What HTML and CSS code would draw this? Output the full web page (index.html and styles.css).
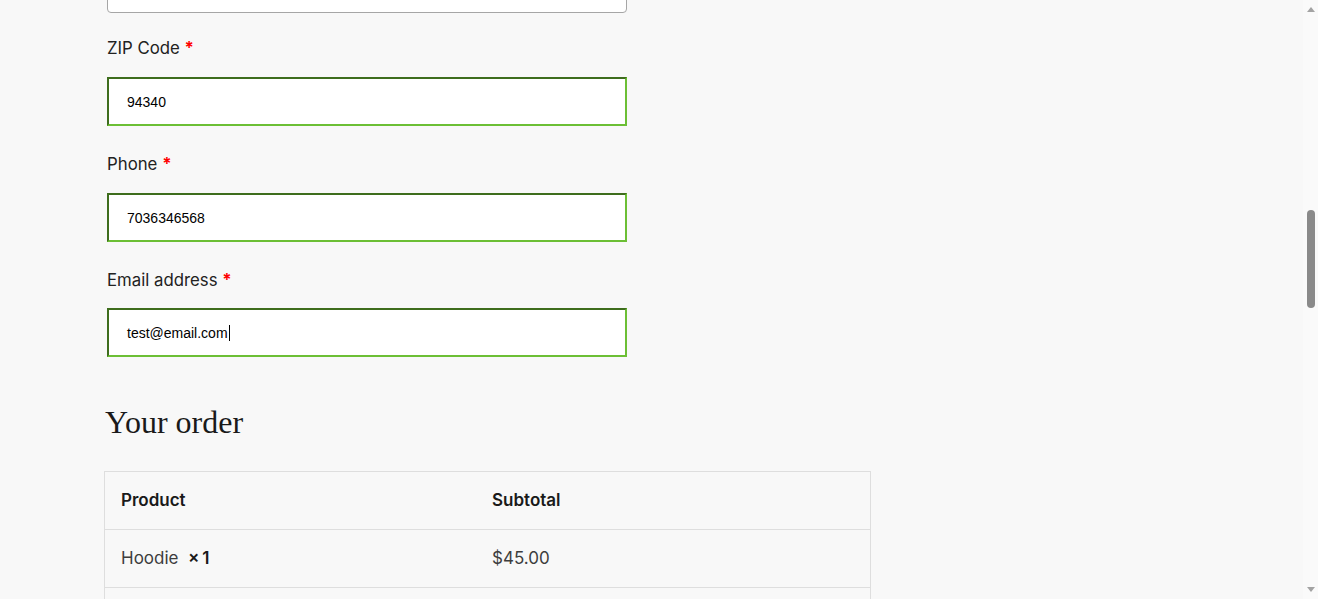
FILE: index.html
```html
<!DOCTYPE html>
<html lang="en">
<head>
<meta charset="utf-8">
<title>Checkout</title>
<link rel="stylesheet" href="styles.css">
</head>
<body>
<div class="app">
  <main class="page">
    <div class="form">
      <div class="select-box"></div>
      <div class="field">
        <div class="label">ZIP Code <span class="req">*</span></div>
        <div class="input">94340</div>
      </div>
      <div class="field">
        <div class="label">Phone <span class="req">*</span></div>
        <div class="input">7036346568</div>
      </div>
      <div class="field last">
        <div class="label">Email address <span class="req">*</span></div>
        <div class="input">test@email.com<span class="caret"></span></div>
      </div>
    </div>
    <h2 class="order-title">Your order</h2>
    <table class="order">
      <thead>
        <tr><th class="c1">Product</th><th>Subtotal</th></tr>
      </thead>
      <tbody>
        <tr><td class="c1">Hoodie&nbsp; <strong>×&thinsp;1</strong></td><td>$45.00</td></tr>
        <tr><td class="c1">&nbsp;</td><td>&nbsp;</td></tr>
      </tbody>
    </table>
  </main>
  <aside class="scrollbar">
    <span class="arrow up"></span>
    <div class="track"><div class="thumb"></div></div>
    <span class="arrow down"></span>
  </aside>
</div>
</body>
</html>
```
FILE: styles.css
```css
html, body {
  margin: 0;
  padding: 0;
  height: 100%;
  overflow: hidden;
  background: #f8f8f8;
}
body {
  font-family: Inter, "Liberation Sans", sans-serif;
  color: #1f1f1f;
}
.app {
  display: flex;
  height: 599px;
}
.page {
  flex: 1;
  padding-left: 104px;
  overflow: hidden;
}
.form {
  margin-left: 3px;
  width: 520px;
}
.select-box {
  height: 40px;
  margin-top: -27px;
  box-sizing: border-box;
  border: 1px solid #a6a6a6;
  border-radius: 4px;
  background: #fff;
}
.field {
  display: flex;
  flex-direction: column;
}
.label {
  font-size: 16.8px;
  line-height: 24px;
  margin-top: 23px;
  margin-bottom: 17px;
  color: #222;
}
.field + .field .label {
  margin-top: 26px;
}
.field.last .label {
  margin-bottom: 16px;
}
.req {
  color: #f00;
  font-weight: 700;
}
.input {
  height: 49px;
  box-sizing: border-box;
  border-style: solid;
  border-width: 2px;
  border-color: #3e6d1d #6cbf35 #6cbf35 #3e6d1d;
  background: #fff;
  padding-left: 18px;
  display: flex;
  align-items: center;
  font-family: "Liberation Sans", Arial, sans-serif;
  font-size: 14px;
  color: #000;
}
.caret {
  display: inline-block;
  width: 1px;
  height: 16px;
  background: #000;
  margin-left: 1px;
}
.order-title {
  font-family: "Liberation Serif", "Times New Roman", serif;
  font-weight: 400;
  font-size: 32px;
  line-height: 40px;
  margin: 45px 0 0 1px;
  color: #1a1a1a;
}
.order {
  margin-top: 29px;
  width: 767px;
  border-collapse: collapse;
  border: 1px solid #dedede;
  font-size: 17px;
}
.order th, .order td {
  height: 55px;
  padding: 0 16px 2px;
  text-align: left;
  border-bottom: 1px solid #dedede;
}
.order th {
  font-weight: 600;
  color: #1a1a1a;
}
.order td {
  color: #3d3d3d;
}
.order td strong {
  color: #1a1a1a;
  font-weight: 600;
}
.order .c1 {
  width: 339px;
}
.scrollbar {
  width: 15px;
  background: #fafafa;
  display: flex;
  flex-direction: column;
  align-items: center;
}
.arrow {
  width: 0;
  height: 0;
  border-left: 4px solid transparent;
  border-right: 4px solid transparent;
  margin: 7px 0;
}
.arrow.up { border-bottom: 5px solid #a3a3a3; }
.arrow.down { border-top: 5px solid #a3a3a3; }
.track {
  flex: 1;
  width: 100%;
  display: flex;
  justify-content: center;
}
.thumb {
  width: 8px;
  height: 98px;
  margin-top: 191px;
  background: #8a8a8a;
  border-radius: 4px;
}
```
